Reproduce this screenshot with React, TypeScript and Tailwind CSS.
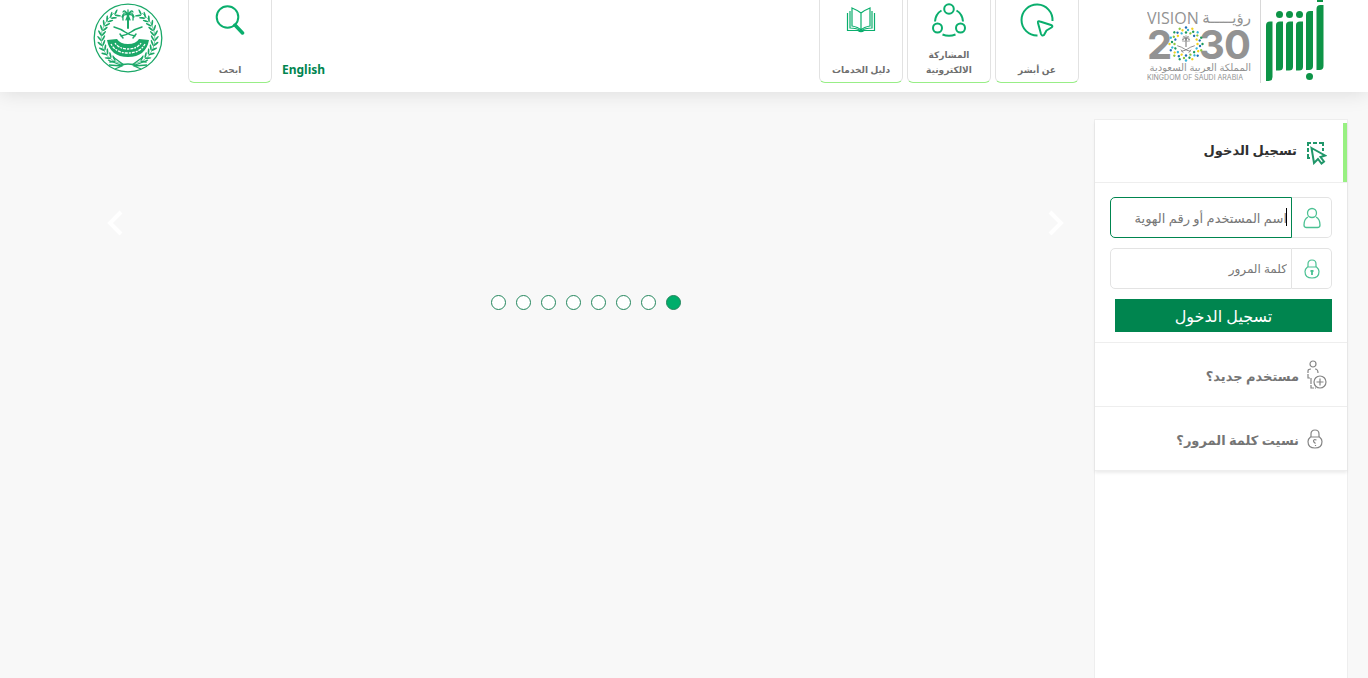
import React from 'react'

const MOI_LEAVES = Array.from({ length: 12 }, (_, i) => 150 - i * 11)
const VISION_DOTS = Array.from({ length: 16 }, (_, i) => i * 22.5)
const VISION_COLORS = ['#1c9a5b', '#8cc63f', '#1f6fb5', '#f2d21f', '#35b5d8']
const SLIDES = [1, 2, 3, 4, 5, 6, 7, 8]

const AbsherLogo: React.FC = () => (
  <svg width="60" height="83" viewBox="0 0 60 83" fill="#0d9447" role="img" aria-label="أبشر">
    <path d="M1 25.500q0-4 4-4h2.500V77q0 4-4 4H1Z" />
    <path d="M11 25q0-3.500 4-3.500h3V67q0 3.500-4 3.500h-3Z" />
    <path d="M21 25q0-3.500 4-3.500h3V67q0 3.500-4 3.500h-3Z" />
    <path d="M31 25q0-3.500 4-3.500h3V67q0 3.500-4 3.500h-3Z" />
    <path d="M41 15q0-4 4-4h3V66q0 4-4 4h-3Z" />
    <path d="M51.500 9q0-4 4-4h3V66q0 4-4 4h-3ZM52 0h6v2h-6Z" />
    <circle cx="14.500" cy="14.500" r="3.500" />
    <circle cx="24.500" cy="14.500" r="3.500" />
    <circle cx="34.500" cy="14.500" r="3.500" />
    <circle cx="44.500" cy="76.500" r="3.500" />
  </svg>
)

const PalmAndSwords: React.FC = () => (
  <g fill="none" stroke="currentColor" strokeLinecap="round">
    <path d="M0 2V14" strokeWidth="2" />
    <path
      d="M0 1Q-4-4-6 3M0 1Q-6-1-5 6M0 1Q4-4 6 3M0 1Q6-1 5 6M0 1Q-3-5-5-2M0 1Q3-5 5-2M0 1V-4M0 1L-2 6M0 1L2 6"
      strokeWidth="1.300"
    />
    <path d="M-14 13Q-7 15-3 18T7 22M14 13Q7 15 3 18T-7 22M-8 20l3 4M8 20l-3 4" strokeWidth="1.500" />
  </g>
)

const MinistryEmblem: React.FC = () => (
  <svg width="70" height="70" viewBox="0 0 70 70" className="text-[#1ba868]" role="img" aria-label="وزارة الداخلية">
    <circle cx="35" cy="35" r="33.800" fill="none" stroke="currentColor" strokeWidth="1.300" />
    {[1, -1].map(side => (
      <g key={side} transform={`translate(35 35) scale(${side} 1)`} fill="currentColor">
        <path d="M6 26Q25 22 27 2Q27-15 14-25" fill="none" stroke="currentColor" strokeWidth=".6" />
        {MOI_LEAVES.map(angle => (
          <g key={angle} transform={`rotate(${angle - 90}) translate(26.500 0)`}>
            <ellipse cx="2" cy="-2" rx="3.200" ry=".9" transform="rotate(-55 2 -2)" />
            <ellipse cx="-2" cy="-2" rx="3.200" ry=".9" transform="rotate(55 -2 -2)" />
          </g>
        ))}
        <path d="M4 27L15 19M5 28L20 22M6 28L19 27M6 28L13 31" fill="none" stroke="currentColor" strokeWidth="1.300" />
      </g>
    ))}
    <g transform="translate(35 11)">
      <PalmAndSwords />
    </g>
    <path d="M14 37l10-1q3 5 11 5t11-5l10 1q-3 17-21 17T14 37Z" fill="currentColor" />
    <path
      d="M18 41q5 9 17 9t17-9M22 40q4 6 13 6t13-6"
      fill="none"
      stroke="#fff"
      strokeWidth="1.300"
      strokeDasharray="2 1 3 1"
    />
    <path d="M26 63q3-2 9-2t9 2" fill="none" stroke="currentColor" strokeWidth="1.600" />
  </svg>
)

const VisionLogo: React.FC = () => (
  <svg
    width="106"
    height="76"
    viewBox="0 0 106 76"
    fill="#939393"
    fontFamily="'Open Sans', 'DejaVu Sans', sans-serif"
    direction="ltr"
    role="img"
    aria-label="Vision 2030"
  >
    <text x="0" y="19" fontSize="16">VISION</text>
    <text x="104" y="18" fontSize="15" direction="rtl">رؤيـــــة</text>
    <g fontFamily="Inter, sans-serif" fontSize="40" fontWeight="700">
      <text x="0" y="54">2</text>
      <text x="52" y="54">3</text>
      <text x="77" y="54">0</text>
    </g>
    <g transform="translate(39 39)">
      {VISION_DOTS.map((angle, i) => (
        <g key={angle} transform={`rotate(${angle})`}>
          <circle cx="16.500" r="1.200" fill={VISION_COLORS[i % 5]} />
          <circle cx="14" cy="2" r="1.200" fill={VISION_COLORS[(i + 2) % 5]} />
          <circle cx="11.500" r="1.200" fill={VISION_COLORS[(i + 3) % 5]} />
        </g>
      ))}
      <g transform="translate(0 -6) scale(.6)" className="text-[#858585]">
        <PalmAndSwords />
      </g>
    </g>
    <text x="104" y="66" fontSize="10" direction="rtl">المملكة العربية السعودية</text>
    <text x="0" y="75" fontSize="7" fontFamily="Inter, sans-serif">KINGDOM OF SAUDI ARABIA</text>
  </svg>
)

const AboutIcon: React.FC = () => (
  <svg width="34" height="34" viewBox="0 0 34 34" fill="none" stroke="#0aae6d" strokeWidth="2" strokeLinejoin="round">
    <path d="M17.500 32.500A15.500 15.500 0 1 1 32.500 18" />
    <path d="M20 18.500Q17.500 17.500 18 20L21 31Q22 33.500 24 32L26.500 27.500L31.500 24.500Q33.500 23 31 22Z" />
  </svg>
)

const ParticipationIcon: React.FC = () => (
  <svg width="34" height="34" viewBox="0 0 34 34" fill="none" stroke="#0aae6d" strokeWidth="2">
    <circle cx="17" cy="6" r="4.800" />
    <circle cx="5.500" cy="25" r="4.500" />
    <circle cx="28.500" cy="25" r="4.500" />
    <path d="M9.500 7.500Q3.500 11 3 18.500M24.500 7.500Q30.500 11 31 18.500M10.500 31.500Q17 34 23.500 31.500" />
  </svg>
)

const GuideIcon: React.FC = () => (
  <svg width="30" height="26" viewBox="0 0 30 26" fill="none" stroke="#0aae6d" strokeWidth="1.200">
    <path d="M15 6Q11 3 6 1V19Q12 20 15 23Q18 20 24 19V1Q19 3 15 6V23" />
    <path d="M4 4V21Q11 21 15 24Q19 21 26 21V4M1.500 6V23.500H12Q15 26 18 23.500H28.500V6" />
  </svg>
)

const SearchIcon: React.FC = () => (
  <svg width="30" height="30" viewBox="0 0 30 30" fill="none" stroke="#0aae6d">
    <circle cx="12.500" cy="12" r="10.800" strokeWidth="2" />
    <path d="M20 20L27.500 28" strokeWidth="3.500" strokeLinecap="round" />
  </svg>
)

const SelectIcon: React.FC = () => (
  <svg width="22" height="24" viewBox="0 0 22 24" fill="none" stroke="#20976a" strokeWidth="2">
    <path d="M3 5V2h3M8 2h4M14 2h4v3M18 7v3M3 7v4M3 13v4h2" />
    <path d="M6.500 7L20 14.500L15.500 16L19 20.500L16.500 22.500L13 18L9 22Z" />
  </svg>
)

const UserIcon: React.FC = () => (
  <svg width="20" height="22" viewBox="0 0 20 22" fill="none" stroke="#4bc193" strokeWidth="1.300">
    <circle cx="10" cy="6" r="4.500" />
    <path d="M6 10Q2 12 2 18Q2 20.500 4.500 20.500H15.500Q18 20.500 18 18Q18 12 14 10" />
  </svg>
)

interface LockIconProps {
  color: string
  question?: boolean
}

const LockIcon: React.FC<LockIconProps> = ({ color, question }) => (
  <svg width="16" height="20" viewBox="0 0 16 20" fill="none" stroke={color} strokeWidth="1.200">
    <path d="M4 8V5Q4 1 8 1T12 5V8" />
    <path d="M3.500 8H12.500Q15 10 15 12.500Q15 19 8 19T1 12.500Q1 10 3.500 8Z" />
    {question ? (
      <path d="M9.500 11Q6.500 10 6.500 12Q6.500 13 8.500 14.500M8.500 16v1" />
    ) : (
      <path d="M8 11v5M6.500 12h3" strokeWidth="1.800" />
    )}
  </svg>
)

const NewUserIcon: React.FC = () => (
  <svg width="20" height="30" viewBox="0 0 20 30" fill="none" stroke="#858585" strokeWidth="1.200">
    <circle cx="6" cy="4" r="3" />
    <path d="M4 9Q1 9 1 11V18H4V28H9M8 9Q11 9 11 13" strokeDasharray="6 1" />
    <circle cx="13" cy="22" r="6" />
    <path d="M13 18.500v7M9.500 22h7" />
  </svg>
)

interface NavTileProps {
  label: string
  icon: React.ReactNode
}

const NavTile: React.FC<NavTileProps> = ({ label, icon }) => (
  <a
    href="#"
    className="flex h-[83px] w-[84px] flex-col items-center justify-between rounded-b-md border border-t-0 border-[#e2e2e2] border-b-[#98ee86] pb-[5px] text-center text-[9px] leading-[15px] font-bold text-[#6f6f6f]"
  >
    <span className="flex h-10 items-center justify-center">{icon}</span>
    <span className="w-[66px]">{label}</span>
  </a>
)

const Header: React.FC = () => (
  <header className="z-10 flex h-[92px] items-start bg-white ps-[43px] pe-[93px] shadow-[0_0_20px_rgba(0,0,0,0.13)]">
    <a href="#" className="border-l border-[#d8d8d8] pl-1">
      <AbsherLogo />
    </a>
    <a href="#" className="mr-[7px] pt-[5px]">
      <VisionLogo />
    </a>
    <nav className="mr-[68px] flex gap-1">
      <NavTile label="عن أبشر" icon={<AboutIcon />} />
      <NavTile label="المشاركة الالكترونية" icon={<ParticipationIcon />} />
      <NavTile label="دليل الخدمات" icon={<GuideIcon />} />
    </nav>
    <div className="mr-auto flex">
      <a href="#" lang="en" className="pt-[60px] text-[12px] leading-5 font-bold text-[#00854f]">
        English
      </a>
      <div className="mr-[10px]">
        <NavTile label="ابحث" icon={<SearchIcon />} />
      </div>
      <a href="#" className="mr-[25px] pt-[3px]">
        <MinistryEmblem />
      </a>
    </div>
  </header>
)

const Carousel: React.FC = () => (
  <section className="flex-1 pt-[118px] pr-[30px] pl-[107px]">
    <div className="flex justify-between text-white">
      <button type="button" aria-label="السابق">
        <svg width="16" height="26" viewBox="0 0 16 26" fill="none" stroke="currentColor" strokeWidth="4">
          <path d="M2 2L13 13L2 24" />
        </svg>
      </button>
      <button type="button" aria-label="التالي">
        <svg width="16" height="26" viewBox="0 0 16 26" fill="none" stroke="currentColor" strokeWidth="4">
          <path d="M14 2L3 13L14 24" />
        </svg>
      </button>
    </div>
    <div className="mt-[59px] flex justify-center gap-[10px]">
      {SLIDES.map(n => (
        <button
          key={n}
          type="button"
          aria-label={`شريحة ${n}`}
          className={
            n === 1
              ? 'size-[15px] rounded-full border border-[#23865c] bg-[#00ae6b]'
              : 'size-[15px] rounded-full border border-[#23865c] bg-white'
          }
        />
      ))}
    </div>
  </section>
)

const LoginPanel: React.FC = () => (
  <aside className="ms-5 mt-[27px] w-[254px] border border-b-0 border-[#eeeeee] bg-white">
    <div className="shadow-[0_2px_3px_rgba(0,0,0,0.08)]">
      <h2 className="flex h-[63px] border-b border-[#eeeeee] text-[13px] font-bold text-[#303030]">
        <span className="mt-[3px] w-1 bg-[#98f082]" />
        <span className="flex items-center gap-2 ps-4 pt-1">
          <SelectIcon />
          <span className="pb-1">تسجيل الدخول</span>
        </span>
      </h2>
      <form className="border-b border-[#eeeeee] px-[15px] pt-[14px] pb-[10px]" onSubmit={e => e.preventDefault()}>
        <div className="mb-[10px] flex h-[41px]">
          <label
            htmlFor="username"
            aria-label="اسم المستخدم"
            className="flex w-10 items-center justify-center rounded-r-[5px] border border-l-0 border-[#e3e3e3]"
          >
            <UserIcon />
          </label>
          <div className="relative flex-1">
            <input
              id="username"
              type="text"
              placeholder="اسم المستخدم أو رقم الهوية"
              className="h-full w-full rounded-l-[5px] border border-[#00854f] px-1 text-[13px] outline-none placeholder:text-[#777777]"
            />
            <span className="absolute top-[11px] right-[5px] h-[18px] w-px bg-black" />
          </div>
        </div>
        <div className="mb-[10px] flex h-[41px]">
          <label
            htmlFor="password"
            aria-label="كلمة المرور"
            className="flex w-10 items-center justify-center rounded-r-[5px] border border-l-0 border-[#e3e3e3]"
          >
            <LockIcon color="#4bc193" />
          </label>
          <input
            id="password"
            type="password"
            placeholder="كلمة المرور"
            className="min-w-0 flex-1 rounded-l-[5px] border border-[#e3e3e3] px-1 text-[12px] outline-none placeholder:text-[#777777]"
          />
        </div>
        <div className="pl-[5px]">
          <button type="submit" className="h-[33px] w-full bg-[#00854f] text-[16px] leading-5 text-white">
            تسجيل الدخول
          </button>
        </div>
      </form>
      <a
        href="#"
        className="flex h-16 items-center gap-2 border-b border-[#eeeeee] ps-5 text-[13px] font-bold text-[#757575]"
      >
        <NewUserIcon />
        <span className="pt-1">مستخدم جديد؟</span>
      </a>
      <a
        href="#"
        className="flex h-16 items-center gap-2 border-b border-[#eeeeee] ps-6 text-[13px] font-bold text-[#757575]"
      >
        <LockIcon color="#858585" question />
        <span className="pt-1">نسيت كلمة المرور؟</span>
      </a>
    </div>
  </aside>
)

export default function App() {
  return (
    <div
      dir="rtl"
      lang="ar"
      className="flex min-h-screen flex-col bg-[#f8f8f8] font-['Noto_Sans','DejaVu_Sans',sans-serif]"
    >
      <Header />
      <main className="flex flex-1">
        <LoginPanel />
        <Carousel />
      </main>
    </div>
  )
}
